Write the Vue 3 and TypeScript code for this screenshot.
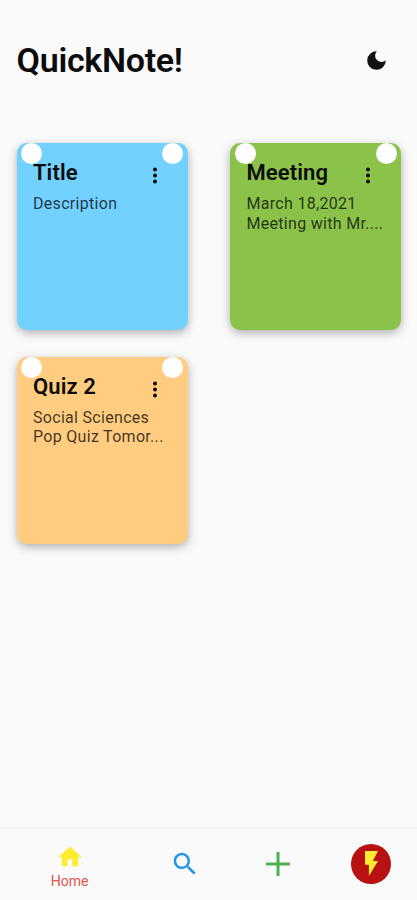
<script setup lang="ts">
interface Note {
  title: string
  lines: string[]
  tone: string
}

const notes: Note[] = [
  { title: 'Title', lines: ['Description'], tone: 'blue' },
  { title: 'Meeting', lines: ['March 18,2021', 'Meeting with Mr....'], tone: 'green' },
  { title: 'Quiz 2', lines: ['Social Sciences', 'Pop Quiz Tomor...'], tone: 'orange' },
]
</script>

<template>
  <div class="app">
    <header class="header">
      <h1 class="brand">QuickNote!</h1>
      <button class="theme" aria-label="Dark mode">
        <svg width="19" height="19" viewBox="0 0 19 19">
          <path d="M9.9 .2A9.3 9.3 0 1 0 18.8 9.6C14.5 12.6 8.7 10.2 8.2 5.6C8 3.5 8.6 1.6 9.9 .2z" fill="#111" />
        </svg>
      </button>
    </header>

    <main class="grid">
      <article v-for="note in notes" :key="note.title" class="card" :class="note.tone">
        <span class="pin left"></span>
        <span class="pin right"></span>
        <div class="top">
          <h2 class="title">{{ note.title }}</h2>
          <svg class="more" width="6" height="18" viewBox="0 0 6 18">
            <circle cx="3" cy="2.5" r="2" />
            <circle cx="3" cy="8.5" r="2" />
            <circle cx="3" cy="14.5" r="2" />
          </svg>
        </div>
        <p v-for="line in note.lines" :key="line" class="line">{{ line }}</p>
      </article>
    </main>

    <nav class="nav">
      <a class="item home">
        <svg width="28" height="28" viewBox="0 0 24 24"><path d="M10 20v-6h4v6h5v-8h3L12 3 2 12h3v8z" fill="#ffeb2f" /></svg>
        <span class="label">Home</span>
      </a>
      <a class="item">
        <svg width="30" height="30" viewBox="0 0 24 24"><path d="M15.5 14h-.79l-.28-.27C15.41 12.59 16 11.11 16 9.5 16 5.91 13.09 3 9.5 3S3 5.91 3 9.5 5.91 16 9.5 16c1.61 0 3.09-.59 4.23-1.57l.27.28v.79l5 4.99L20.49 19l-4.99-5zm-6 0C7.01 14 5 11.99 5 9.5S7.01 5 9.5 5 14 7.01 14 9.5 11.99 14 9.5 14z" fill="#2196e3" /></svg>
      </a>
      <a class="item add">
        <svg width="24" height="24" viewBox="0 0 24 24"><path d="M10.5 0h3v10.5H24v3H13.5V24h-3V13.5H0v-3h10.5z" fill="#4caf50" /></svg>
      </a>
      <a class="item flash">
        <span class="disc">
          <svg width="13" height="25" viewBox="7 2 10 20" preserveAspectRatio="none"><path d="M7 2v11h3v9l7-12h-4l4-8z" fill="#ffeb30" /></svg>
        </span>
      </a>
    </nav>
  </div>
</template>

<style>
body {
  background: #fafafa;
}
</style>

<style scoped>
.app {
  width: 417px;
  height: 900px;
  display: flex;
  flex-direction: column;
  overflow: hidden;
  box-sizing: border-box;
  background: #fafafa;
  color: #0c0c0c;
  font-family: Roboto, sans-serif;
}
.header {
  height: 121px;
  display: flex;
  align-items: center;
  justify-content: space-between;
  padding: 0 31px 0 16.6px;
  box-sizing: border-box;
}
.brand {
  margin: 0;
  padding-bottom: 2px;
  font-size: 34px;
  line-height: 42px;
  font-weight: 600;
  letter-spacing: -0.3px;
}
.theme {
  display: flex;
  padding: 0;
  border: 0;
  background: none;
}
.grid {
  flex: 1;
  display: grid;
  grid-template-columns: 171px 171px;
  grid-auto-rows: 187px;
  column-gap: 42.5px;
  row-gap: 26.4px;
  align-content: start;
  padding: 22.2px 0 0 16.5px;
}
.card {
  position: relative;
  box-sizing: border-box;
  padding: 17px 16px 0 16.5px;
  border-radius: 10px;
  box-shadow: 0 3px 10px rgba(0, 0, 0, 0.3);
}
.blue {
  background: #73d1ff;
}
.green {
  background: #8bc34a;
}
.orange {
  background: #ffcc80;
}
.pin {
  position: absolute;
  top: 0;
  width: 21px;
  height: 21px;
  border-radius: 50%;
  background: #fff;
}
.left {
  left: 4.5px;
}
.right {
  right: 4.5px;
}
.top {
  position: relative;
  display: flex;
  justify-content: space-between;
  height: 34px;
  padding-right: 14px;
}
.title {
  margin: 0;
  font-size: 22px;
  line-height: 26px;
  font-weight: 600;
  letter-spacing: 0.1px;
}
.more {
  margin-top: 7px;
  fill: #0a0a0a;
}
.line {
  margin: 0;
  font-size: 16px;
  line-height: 19.5px;
  letter-spacing: 0.3px;
  color: rgba(0, 0, 0, 0.75);
  white-space: nowrap;
}
.nav {
  flex: none;
  height: 72px;
  box-sizing: border-box;
  border-top: 1px solid #eeeeee;
  display: grid;
  grid-template-columns: 139px 92px 94px 92px;
  padding-bottom: 2px;
}
.item {
  display: flex;
  align-items: center;
  justify-content: center;
}
.home {
  flex-direction: column;
  gap: 2px;
  padding-top: 5px;
}
.label {
  font-size: 14px;
  line-height: 16px;
  color: #e0554e;
}
.disc {
  width: 40px;
  height: 40px;
  border-radius: 50%;
  background: #b71111;
  display: flex;
  align-items: center;
  justify-content: center;
}
</style>
